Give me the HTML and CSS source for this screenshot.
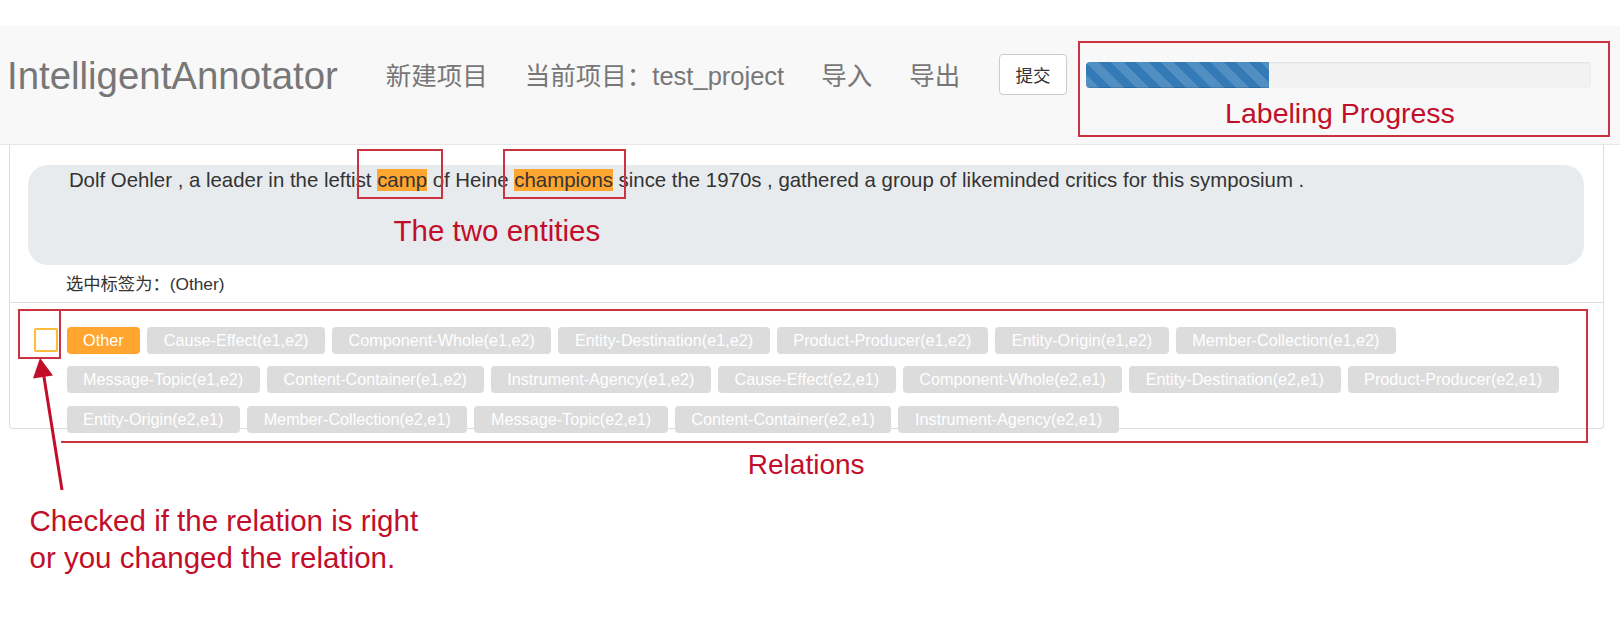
FILE: index.html
```html
<!DOCTYPE html>
<html lang="zh">
<head>
<meta charset="utf-8">
<title>IntelligentAnnotator</title>
<link rel="stylesheet" href="styles.css">
</head>
<body>
<div class="page">
  <nav class="navbar">
    <a class="brand">IntelligentAnnotator</a>
    <ul class="nav">
      <li>新建项目</li>
      <li>当前项目：test_project</li>
      <li>导入</li>
      <li>导出</li>
    </ul>
    <button class="btn-submit" type="button">提交</button>
    <div class="progress-note">
      <div class="progress"><div class="progress-bar" style="width:36.2%"></div></div>
      <div class="note note-progress">Labeling Progress</div>
    </div>
  </nav>

  <main class="panel">
    <div class="jumbo">
      <p class="sentence">Dolf Oehler , a leader in the leftist <span class="ent ent-a">camp</span> of Heine <span class="ent ent-b">champions</span> since the 1970s , gathered a group of likeminded critics for this symposium .</p>
      <div class="note note-entities">The two entities</div>
    </div>
    <div class="selected">选中标签为：(Other)</div>
    <div class="relations">
      <div class="check-box"><span class="checkbox"></span></div>
      <div class="label-box">
        <div class="label-row">
          <span class="tag tag-active">Other</span>
          <span class="tag">Cause-Effect(e1,e2)</span>
          <span class="tag">Component-Whole(e1,e2)</span>
          <span class="tag">Entity-Destination(e1,e2)</span>
          <span class="tag">Product-Producer(e1,e2)</span>
          <span class="tag">Entity-Origin(e1,e2)</span>
          <span class="tag">Member-Collection(e1,e2)</span>
        </div>
        <div class="label-row">
          <span class="tag">Message-Topic(e1,e2)</span>
          <span class="tag">Content-Container(e1,e2)</span>
          <span class="tag">Instrument-Agency(e1,e2)</span>
          <span class="tag">Cause-Effect(e2,e1)</span>
          <span class="tag">Component-Whole(e2,e1)</span>
          <span class="tag">Entity-Destination(e2,e1)</span>
          <span class="tag">Product-Producer(e2,e1)</span>
        </div>
        <div class="label-row">
          <span class="tag">Entity-Origin(e2,e1)</span>
          <span class="tag">Member-Collection(e2,e1)</span>
          <span class="tag">Message-Topic(e2,e1)</span>
          <span class="tag">Content-Container(e2,e1)</span>
          <span class="tag">Instrument-Agency(e2,e1)</span>
        </div>
      </div>
    </div>
  </main>

  <div class="note note-relations">Relations</div>
  <div class="note note-checked">Checked if the relation is right<br>or you changed the relation.</div>

  <svg class="arrow" width="80" height="500" viewBox="0 0 80 500" aria-hidden="true">
    <line x1="62" y1="490" x2="43.5" y2="374" stroke="#c20e2a" stroke-width="3"/>
    <polygon points="40,358 33,378.5 53,375.5" fill="#c20e2a"/>
  </svg>
</div>
</body>
</html>
```

FILE: styles.css
```css
* { box-sizing: border-box; }

html, body {
  margin: 0;
  padding: 0;
  background: #fff;
}

body {
  font-family: "Liberation Sans", "Noto Sans CJK SC", sans-serif;
  color: #333;
}

.page {
  position: relative;
  width: 1620px;
  min-height: 622px;
  padding-top: 26px;
}

/* ---------- navbar ---------- */
.navbar {
  display: flex;
  align-items: flex-start;
  height: 119px;
  padding-left: 7px;
  background: #f8f8f8;
  border-bottom: 1px solid #e7e7e7;
}

.brand {
  margin-top: 29px;
  margin-right: 48px;
  font-size: 38.4px;
  line-height: 42px;
  color: #777;
  white-space: nowrap;
}

.nav {
  display: flex;
  gap: 37px;
  margin: 35px 0 0 0;
  padding: 0;
  list-style: none;
  font-size: 25.5px;
  line-height: 30px;
  color: #777;
  white-space: nowrap;
}

.btn-submit {
  margin-top: 28px;
  margin-left: 39px;
  width: 67.5px;
  height: 41px;
  padding: 0;
  background: #fff;
  border: 1px solid #ccc;
  border-radius: 4px;
  font-family: "Liberation Sans", "Noto Sans CJK SC", sans-serif;
  font-size: 17.5px;
  color: #333;
}

.progress-note {
  margin-top: 15px;
  margin-left: 10.8px;
  width: 532.4px;
  height: 96px;
  border: 2px solid #cc3340;
  padding: 19.3px 17.3px 0 6.6px;
}

.progress {
  height: 26px;
  background: #f2f2f2;
  border-radius: 4px;
  overflow: hidden;
  box-shadow: inset 0 1px 2px rgba(0, 0, 0, 0.08);
}

.progress-bar {
  height: 100%;
  background-color: #337ab7;
  background-image: linear-gradient(45deg,
    rgba(255, 255, 255, 0.15) 25%, transparent 25%,
    transparent 50%, rgba(255, 255, 255, 0.15) 50%,
    rgba(255, 255, 255, 0.15) 75%, transparent 75%, transparent);
  background-size: 25px 25px;
  box-shadow: inset 0 -1px 0 rgba(0, 0, 0, 0.12);
}

/* ---------- annotations ---------- */
.note {
  color: #c20e2a;
  white-space: nowrap;
}

.note-progress {
  margin-top: 8px;
  margin-left: 139px;
  font-size: 28.5px;
  line-height: 34px;
}

.note-entities {
  margin-top: 21.5px;
  margin-left: 324.7px;
  font-size: 29.5px;
  line-height: 34px;
}

.note-relations {
  margin-top: 20.3px;
  margin-left: 747.8px;
  font-size: 28px;
  line-height: 32px;
}

.note-checked {
  margin-top: 20.4px;
  margin-left: 29.5px;
  font-size: 29.5px;
  line-height: 37.6px;
}

.arrow {
  position: absolute;
  left: 0;
  top: 0;
}

/* ---------- panel ---------- */
.panel {
  display: block;
  margin-left: 9px;
  width: 1595px;
  height: 284px;
  padding-top: 20px;
  border: 1px solid #ddd;
  border-top: 0;
  border-radius: 0 0 4px 4px;
}

.jumbo {
  margin: 0 19.5px 0 18.2px;
  height: 100px;
  padding-left: 40.7px;
  background: #e8ebee;
  border-radius: 20px;
}

.sentence {
  margin: 0;
  padding-top: 3px;
  font-size: 20.4px;
  line-height: 24px;
  color: #333;
  white-space: nowrap;
}

.ent {
  position: relative;
  background: #ffa530;
}

.ent::after {
  content: "";
  position: absolute;
  top: -20.4px;
  bottom: -8px;
  border: 2px solid #cc3340;
}

.ent-a::after { left: -20px; right: -16.2px; }
.ent-b::after { left: -11px; right: -12.7px; }

.selected {
  margin-top: 9px;
  padding-left: 56px;
  font-size: 17.3px;
  line-height: 20px;
  color: #333;
}

.relations {
  display: flex;
  align-items: flex-start;
  margin-top: 8px;
  padding: 6px 0 0 8px;
  border-top: 1px solid #ddd;
}

.check-box {
  width: 43px;
  height: 50px;
  border: 2px solid #cc3340;
  padding: 17px 0 0 14px;
}

.checkbox {
  display: block;
  width: 24px;
  height: 24px;
  border: 2px solid #fcbd3e;
  border-radius: 2px;
  background: #fff;
}

.label-box {
  display: flex;
  flex-direction: column;
  gap: 12.7px;
  width: 1527px;
  height: 134.3px;
  border: 2px solid #cc3340;
  border-left: 0;
  padding: 15.5px 0 0 5.5px;
}

.label-row {
  display: flex;
  gap: 7px;
}

.tag {
  display: block;
  height: 27px;
  padding: 0 16.6px;
  font-size: 16.2px;
  line-height: 27px;
  color: #fff;
  background: #dcdcdc;
  border-radius: 4px;
  white-space: nowrap;
}

.tag-active {
  background: #ffa530;
}
```
